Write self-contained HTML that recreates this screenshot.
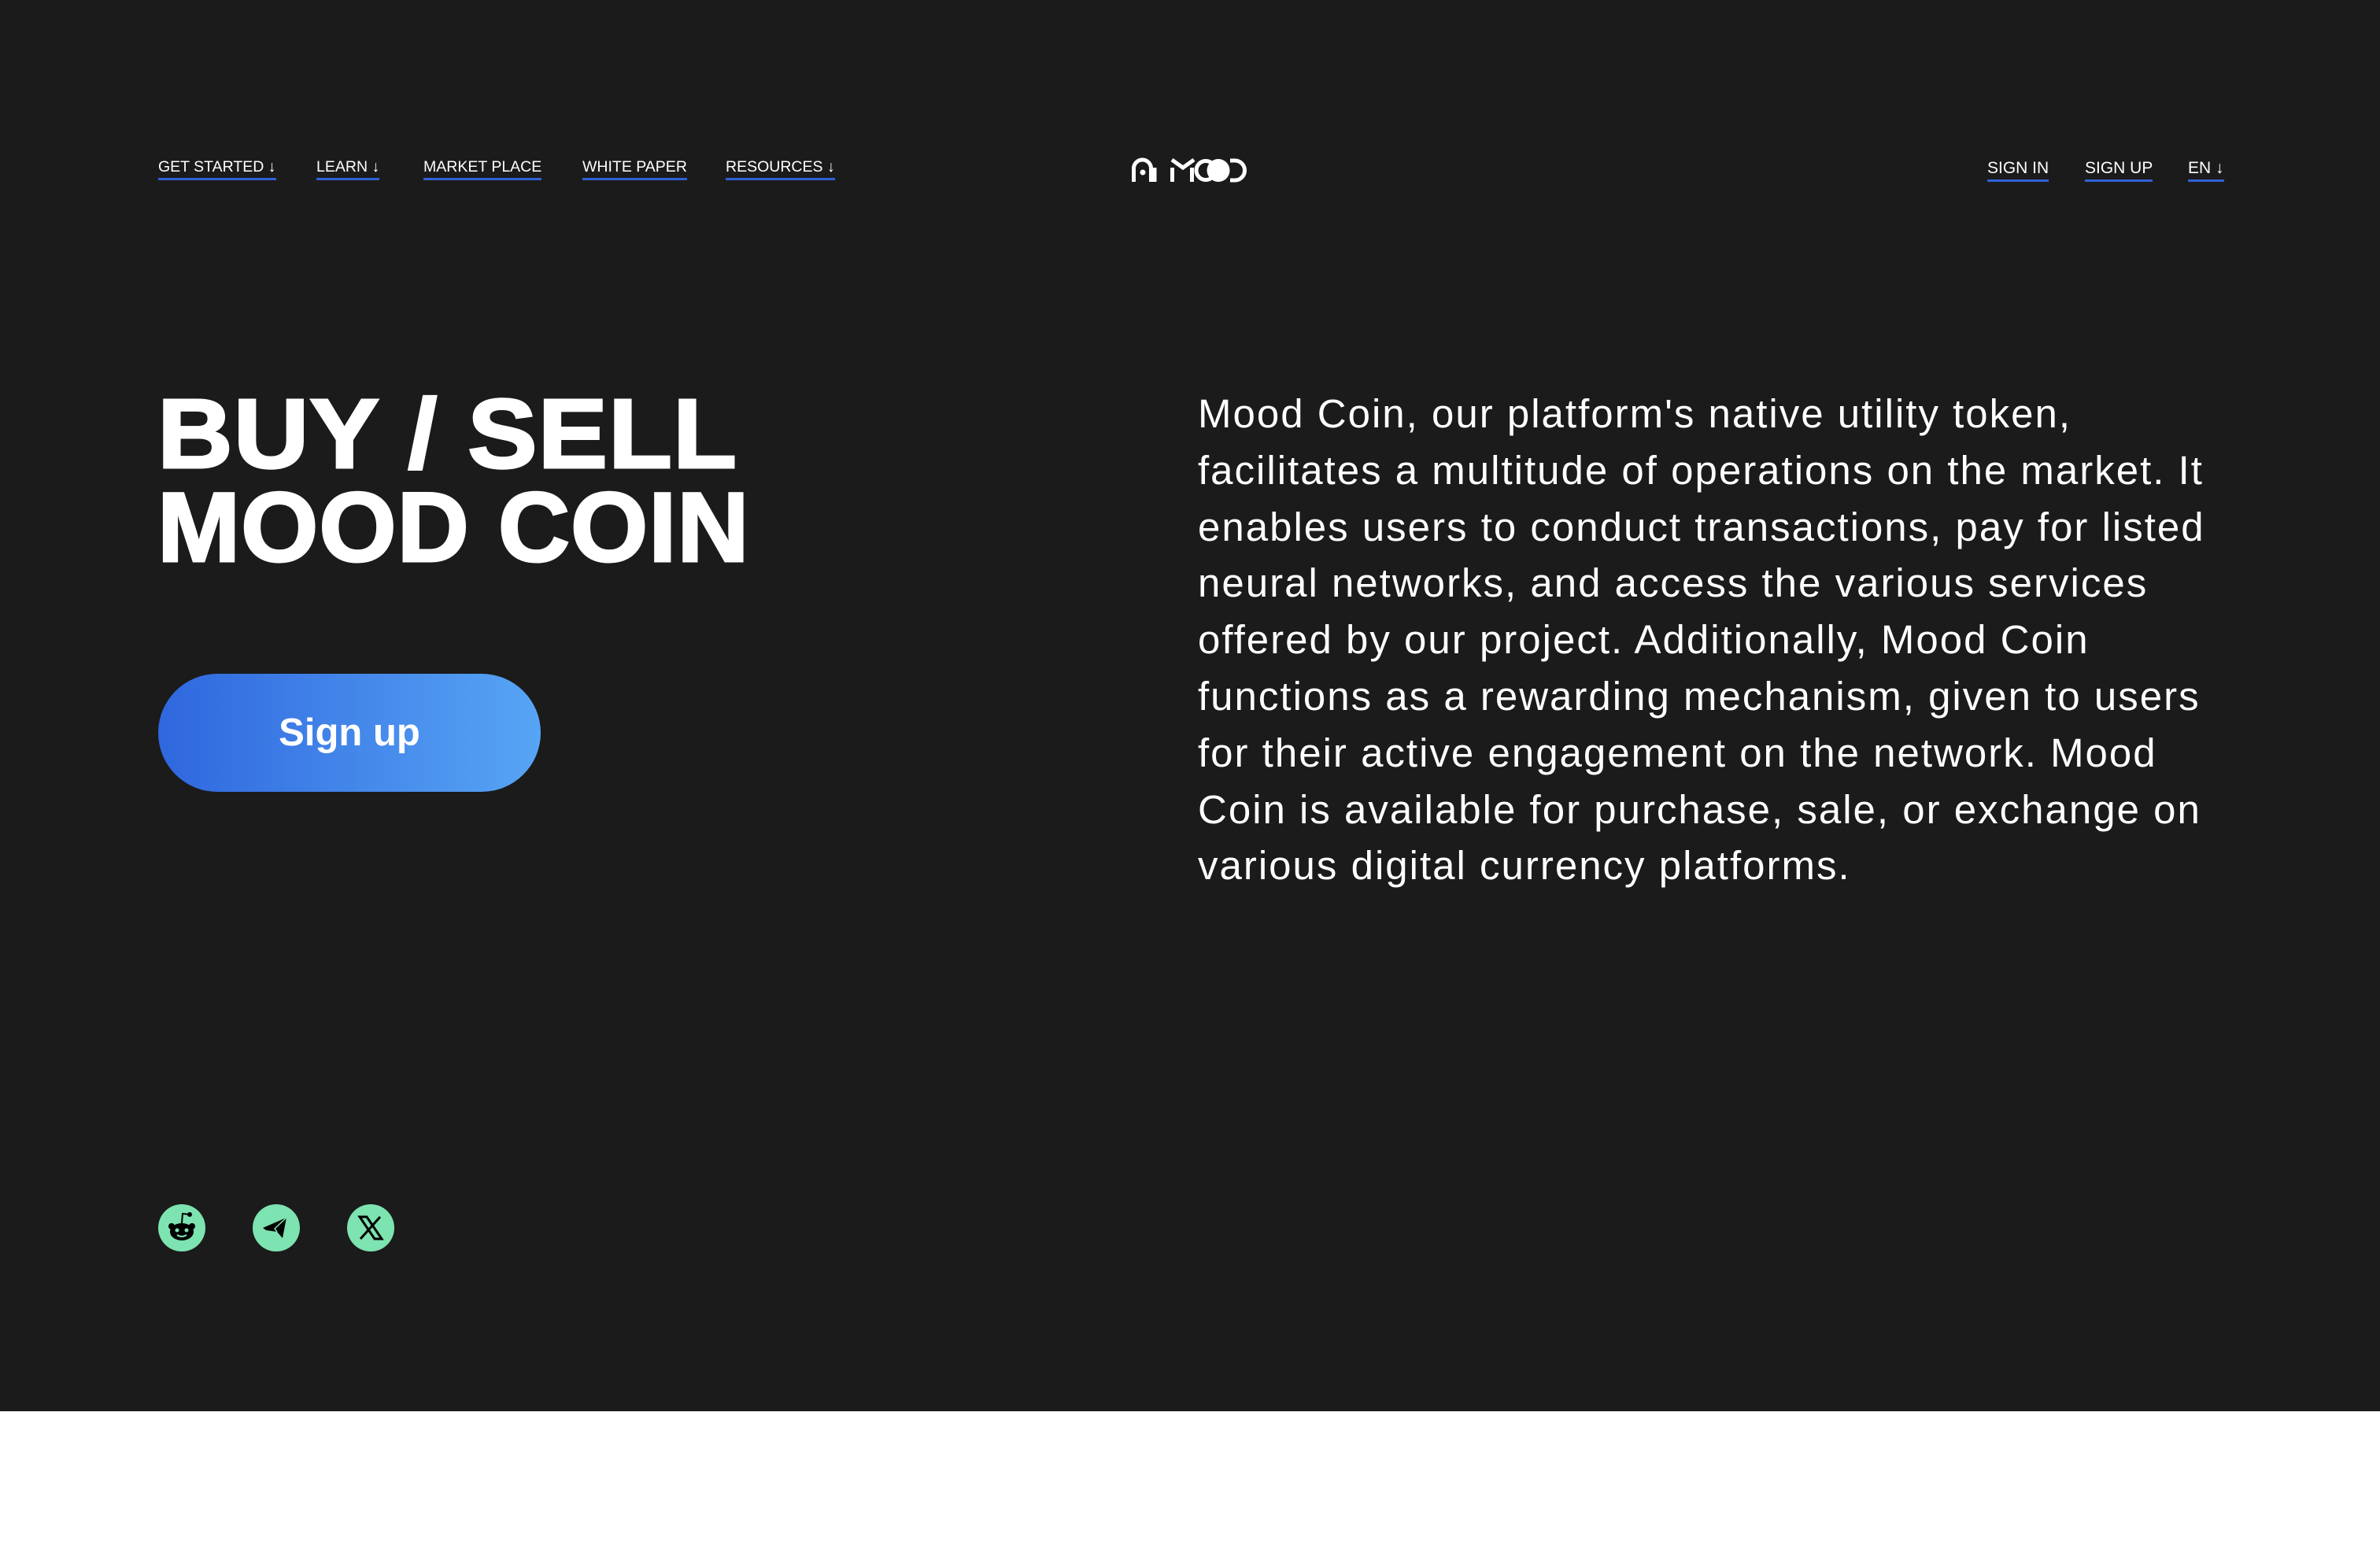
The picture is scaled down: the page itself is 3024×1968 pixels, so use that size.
<!DOCTYPE html>
<html><head><meta charset="utf-8">
<style>
html,body{margin:0;padding:0}
body{width:3024px;height:1968px;background:#fff;position:relative;overflow:hidden;font-family:"Liberation Sans",Arial,sans-serif;color:#fff}
.dark{position:absolute;left:0;top:0;width:3024px;height:1793px;background:#1b1b1b}
.nav{position:absolute;top:199px;font-size:19.5px;line-height:26px;white-space:nowrap;border-bottom:3px solid #2f62d6;padding-bottom:1px}
.nav2{position:absolute;top:200px;font-size:21px;line-height:28px;white-space:nowrap;border-bottom:3px solid #2f62d6;padding-bottom:0px}
h1{position:absolute;left:200px;top:0;margin:0;font-weight:900;font-size:125px;line-height:119px;letter-spacing:1px;-webkit-text-stroke:3px #fff}
.l{position:absolute;left:0;white-space:nowrap;transform-origin:0 0}
.btn{position:absolute;left:201px;top:856px;width:486px;height:150px;border-radius:75px;background:linear-gradient(90deg,#2f67de,#57a5f5);font-weight:700;font-size:49px;text-align:center;line-height:150px}
.p{position:absolute;left:1522px;top:490px;font-size:51px;line-height:71.8px;letter-spacing:2px;white-space:nowrap}
.ic{position:absolute;top:1530px;width:60px;height:60px;border-radius:50%;background:#7de3b0}
</style></head><body>
<div class="dark"></div>
<div class="nav" style="left:201px">GET STARTED ↓</div>
<div class="nav" style="left:402px">LEARN ↓</div>
<div class="nav" style="left:538px">MARKET PLACE</div>
<div class="nav" style="left:740px">WHITE PAPER</div>
<div class="nav" style="left:922px">RESOURCES ↓</div>

<svg style="position:absolute;left:0;top:0" width="3024" height="300" viewBox="0 0 3024 300">
<g fill="none" stroke="#fff" stroke-width="5">
<path d="M1440.5 231 V214 a11 11 0 0 1 22 0 V231"/>
<path d="M1467 213 V231"/>
<path d="M1489.5 213 V231"/>
<path d="M1489 203 L1503 213 L1517 203"/>
<path d="M1514.5 213 V231"/>
<circle cx="1532" cy="216.5" r="12"/>
<path d="M1563 204 h6 a12.5 12.5 0 0 1 0 25 h-6"/>
</g>
<circle cx="1452" cy="219" r="3.5" fill="#fff"/>
<circle cx="1548" cy="216.5" r="14.5" fill="#fff"/>
</svg>

<div class="nav2" style="left:2525px">SIGN IN</div>
<div class="nav2" style="left:2649px">SIGN UP</div>
<div class="nav2" style="left:2780px">EN ↓</div>

<h1><span class="l" style="top:492px;transform:scaleX(1.06)">BUY / SELL</span><span class="l" style="top:611px;transform:scaleX(1.01)">MOOD COIN</span></h1>

<div class="btn">Sign up</div>

<div class="p">Mood Coin, our platform's native utility token,<br>facilitates a multitude of operations on the market. It<br>enables users to conduct transactions, pay for listed<br>neural networks, and access the various services<br>offered by our project. Additionally, Mood Coin<br>functions as a rewarding mechanism, given to users<br>for their active engagement on the network. Mood<br>Coin is available for purchase, sale, or exchange on<br>various digital currency platforms.</div>

<div class="ic" style="left:201px"><svg width="60" height="60" viewBox="0 0 60 60">
<ellipse cx="30" cy="35" rx="15" ry="11" fill="#000"/>
<circle cx="17" cy="28" r="4" fill="#000"/><circle cx="43" cy="28" r="4" fill="#000"/>
<path d="M30 24 L31 12 L40 13" stroke="#000" stroke-width="2" fill="none"/><circle cx="40" cy="13" r="3" fill="#000"/>
<circle cx="24" cy="33" r="2.5" fill="#7de3b0"/><circle cx="36" cy="33" r="2.5" fill="#7de3b0"/>
<path d="M24 39 q6 4 12 0" stroke="#7de3b0" stroke-width="2" fill="none"/>
</svg></div>
<div class="ic" style="left:321px"><svg width="60" height="60" viewBox="0 0 60 60">
<path d="M13 30 L43 17 L38 43 L31 35 L17 33 Z" fill="#000"/>
<path d="M31 35 L28 31 L43 17" stroke="#7de3b0" stroke-width="1.5" fill="none"/>
</svg></div>
<div class="ic" style="left:441px"><svg width="60" height="60" viewBox="0 0 60 60">
<path d="M16 16 H25 L44 44 H35 Z" fill="none" stroke="#000" stroke-width="3"/>
<path d="M42 16 L17 44" stroke="#000" stroke-width="3"/>
</svg></div>
</body></html>
